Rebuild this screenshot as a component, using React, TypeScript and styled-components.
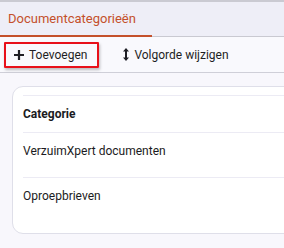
import React from 'react';
import styled, { createGlobalStyle } from 'styled-components';

const GlobalStyle = createGlobalStyle`
  html, body {
    margin: 0;
    padding: 0;
    background: #f8f7fc;
    font-family: Roboto, "Liberation Sans", sans-serif;
    overflow: hidden;
  }
`;

const Page = styled.div`
  width: 284px;
  height: 248px;
  display: flex;
  flex-direction: column;
  background: #f8f7fc;
  overflow: hidden;
`;

const TabBar = styled.div`
  display: flex;
  height: 34px;
  border-top: 2px solid #cacad2;
  border-bottom: 1px solid #c9c9d1;
  background: #eeeef7;
`;

const Tab = styled.div<{ $active?: boolean }>`
  display: flex;
  align-items: center;
  box-sizing: border-box;
  width: 152px;
  padding: 0 0 0 8px;
  font-size: 13px;
  color: #c4502b;
  border-bottom: 2px solid ${({ $active }) => ($active ? '#c4502b' : 'transparent')};
  margin-bottom: -1px;
`;

const Toolbar = styled.div`
  display: flex;
  align-items: center;
  gap: 14px;
  height: 35px;
  padding: 0 4px;
  background: #f9f9fd;
  border-bottom: 1px solid #cfcfd8;
`;

const ToolButton = styled.button<{ $outlined?: boolean }>`
  display: flex;
  align-items: center;
  gap: 5px;
  height: 26px;
  padding: 0 10px 0 8px;
  font-family: inherit;
  font-size: 12px;
  color: #1e1e24;
  background: transparent;
  border: 2px solid ${({ $outlined }) => ($outlined ? '#e8101a' : 'transparent')};
  box-shadow: ${({ $outlined }) => ($outlined ? '1px 2px 3px rgba(0,0,0,0.25)' : 'none')};
  border-radius: 1px;
  cursor: pointer;
`;

const Content = styled.div`
  flex: 1;
  padding: 13px 0 0 12px;
`;

const Card = styled.div`
  width: 300px;
  background: #ffffff;
  border: 1px solid #dfdfe9;
  border-radius: 11px;
  padding: 8px 10px 10px;
`;

const Table = styled.div`
  border-top: 1px solid #ecebf4;
`;

const Row = styled.div<{ $head?: boolean }>`
  box-sizing: border-box;
  height: ${({ $head }) => ($head ? '37px' : '45px')};
  padding-top: 11px;
  line-height: 14px;
  font-size: 12px;
  font-weight: ${({ $head }) => ($head ? 700 : 400)};
  color: #1b1b22;
  border-bottom: 1px solid #ecebf4;
  &:last-child {
    border-bottom: none;
  }
`;

const PlusIcon = () => (
  <svg width="10" height="10" viewBox="0 0 10 10">
    <path d="M5 0v10M0 5h10" stroke="#1e1e24" strokeWidth="2.2" />
  </svg>
);

const SortIcon = () => (
  <svg width="6" height="13" viewBox="0 0 6 13">
    <path d="M3 0L6 3.5H0Z M3 13L0 9.5H6Z" fill="#1e1e24" />
    <rect x="2" y="3" width="2" height="7" fill="#1e1e24" />
  </svg>
);

const App = () => (
  <Page>
    <GlobalStyle />
    <TabBar>
      <Tab $active>Documentcategorieën</Tab>
    </TabBar>
    <Toolbar>
      <ToolButton $outlined>
        <PlusIcon />
        Toevoegen
      </ToolButton>
      <ToolButton>
        <SortIcon />
        Volgorde wijzigen
      </ToolButton>
    </Toolbar>
    <Content>
      <Card>
        <Table>
          <Row $head>Categorie</Row>
          <Row>VerzuimXpert documenten</Row>
          <Row>Oproepbrieven</Row>
        </Table>
      </Card>
    </Content>
  </Page>
);

export default App;
